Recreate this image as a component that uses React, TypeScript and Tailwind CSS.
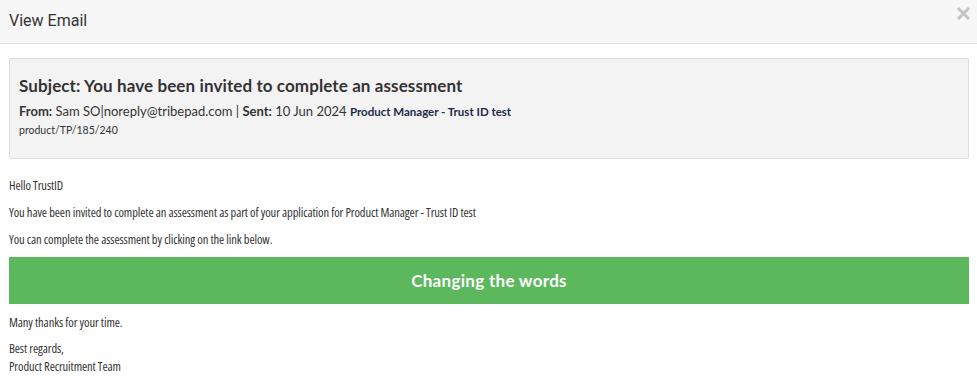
export default function App() {
  return (
    <div className="w-[977px] h-[392px] bg-white text-[#333] font-['Lato',sans-serif] overflow-hidden">
      {/* Modal header */}
      <div className="h-[44px] bg-[#f7f7f7] border-b border-[#dddddd] flex items-center justify-between pl-[9px] pr-[7px]">
        <h3 className="text-[16px] text-[#333] font-['Roboto',sans-serif] -mt-[1px]">View Email</h3>
        <button className="self-start mt-[7px] text-[#c4c4c4]">
          <svg width="13" height="13" viewBox="0 0 13 13">
            <path d="M2 2 L11 11 M11 2 L2 11" stroke="currentColor" strokeWidth="3" strokeLinecap="square" />
          </svg>
        </button>
      </div>

      <div className="pl-[9px] pr-[8px] pt-[14px]">
        {/* Email meta */}
        <div className="bg-[#f3f3f3] border border-[#dddddd] rounded-[2px] px-[9px] pt-[15px] pb-[19px]">
          <h4 className="text-[17px] font-bold text-[#333] leading-[24px] tracking-[0.1px]">
            Subject: You have been invited to complete an assessment
          </h4>
          <div className="mt-[4px] text-[13px] leading-[18px] text-[#333]">
            <b>From:</b> Sam SO|noreply@tribepad.com | <b>Sent:</b> 10 Jun 2024{" "}
            <span className="text-[11.5px] font-bold text-[#1c2a4a]">Product Manager - Trust ID test</span>
          </div>
          <div className="text-[10.5px] leading-[18px] text-[#333]">product/TP/185/240</div>
        </div>

        {/* Email body */}
        <div className="font-['Open_Sans',sans-serif] [font-stretch:75%] text-[12.5px] tracking-[-0.1px] text-[#333] leading-[18px]">
          <p className="mt-[18px]">Hello TrustID</p>
          <p className="mt-[9px]">You have been invited to complete an assessment as part of your application for Product Manager - Trust ID test</p>
          <p className="mt-[9px]">You can complete the assessment by clicking on the link below.</p>
          <a className="mt-[8px] h-[47px] bg-[#5cb85c] text-white font-['Lato',sans-serif] [font-stretch:100%] font-bold text-[17px] tracking-[0.3px] flex items-center justify-center">
            Changing the words
          </a>
          <p className="mt-[10px]">Many thanks for your time.</p>
          <p className="mt-[8px]">Best regards,<br />Product Recruitment Team</p>
        </div>
      </div>
    </div>
  )
}
